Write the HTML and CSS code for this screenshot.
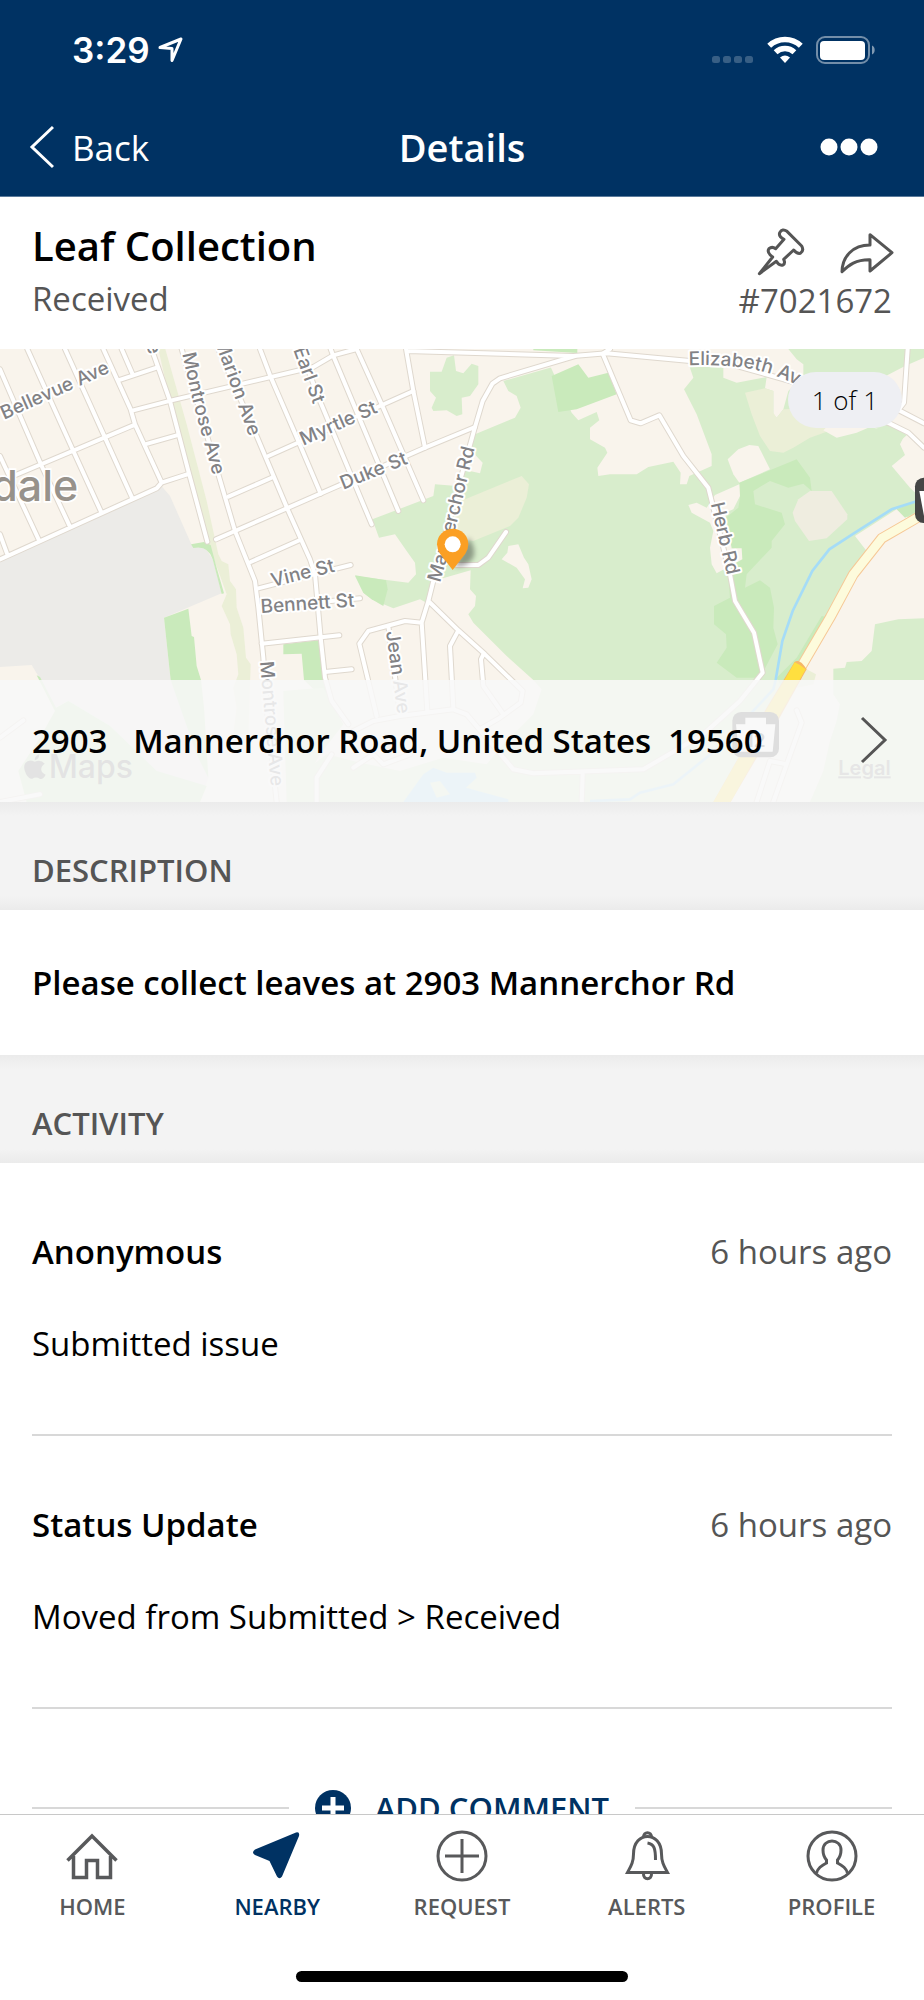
FILE: index.html
```html
<!DOCTYPE html>
<html lang="en">
<head>
    <meta charset="UTF-8">
    <meta name="viewport" content="width=device-width, initial-scale=1.0">
    <title>Details - Leaf Collection</title>
    <link rel="stylesheet" href="styles.css">
</head>
<body>
    <header class="top-bar">
        <div class="status-bar">
            <div class="status-time">
                <span>3:29</span>
                <svg width="26" height="26" viewBox="0 0 26 26" fill="none" stroke="#fff" stroke-width="3" stroke-linejoin="round"><path d="M2 10.500L23 2L14 23.500V11.500Z"/></svg>
            </div>
            <div class="status-icons">
                <svg width="42" height="28" viewBox="0 0 42 28" fill="#fff" fill-opacity="0.22">
                    <rect x="0" y="20" width="8" height="7" rx="2.500"/><rect x="11" y="20" width="8" height="7" rx="2.500"/><rect x="22" y="20" width="8" height="7" rx="2.500"/><rect x="33" y="20" width="8" height="7" rx="2.500"/>
                </svg>
                <svg width="36" height="28" viewBox="0 0 36 28" fill="none" stroke="#fff" stroke-width="5.600">
                    <path d="M2.200 9.800A23 23 0 0 1 33.800 9.800"/>
                    <path d="M8.600 16.200A14 14 0 0 1 27.400 16.200"/>
                    <path d="M13 21.600A8 8 0 0 1 23 21.600L18 27Z" fill="#fff" stroke="none"/>
                </svg>
                <svg width="60" height="28" viewBox="0 0 60 28">
                    <rect x="1" y="1" width="52" height="26" rx="8" fill="none" stroke="#fff" stroke-opacity="0.45" stroke-width="2"/>
                    <rect x="4" y="5" width="45" height="19" rx="4" fill="#fff"/>
                    <path d="M56 9.500C59.600 11 59.600 17 56 18.500Z" fill="#fff" fill-opacity="0.5"/>
                </svg>
            </div>
        </div>
        <nav class="nav-bar">
            <button class="back-btn" type="button">
                <svg width="26" height="44" viewBox="0 0 26 44" fill="none" stroke="#fff" stroke-width="3"><path d="M25 2L4 22L25 42"/></svg>
                Back
            </button>
            <h1>Details</h1>
            <button class="more-btn" type="button" aria-label="More">
                <svg width="58" height="18" viewBox="0 0 58 18" fill="#fff"><circle cx="9" cy="9" r="8.500"/><circle cx="29" cy="9" r="8.500"/><circle cx="49" cy="9" r="8.500"/></svg>
            </button>
        </nav>
    </header>

    <main>
        <section class="issue">
            <div>
                <h2>Leaf Collection</h2>
                <p>Received</p>
            </div>
            <div class="issue-side">
                <div class="issue-actions">
                    <button type="button" aria-label="Pin">
                        <svg width="48" height="48" viewBox="50 54 144 144" fill="none" stroke="#555" stroke-width="9" stroke-linejoin="round"><path d="M57 191L97 141Q78 127 86 116Q95 108 106 116L131 88Q114 80 118 68Q126 54 140 64L184 108Q192 122 180 130Q170 132 160 120L130 148Q136 160 128 165Q116 168 108 154Z"/></svg>
                    </button>
                    <button type="button" aria-label="Share">
                        <svg width="54" height="48" viewBox="302 54 162 144" fill="none" stroke="#555" stroke-width="9" stroke-linejoin="round"><path d="M392 74L458 128L392 183V149C350 148 328 165 308 185C309 140 340 105 392 105Z"/></svg>
                    </button>
                </div>
                <p>#7021672</p>
            </div>
        </section>

        <section class="map">
            <svg class="map-canvas" viewBox="0 24 2772 1359" role="img" aria-label="Map">
                <rect class="land" x="0" y="0" width="2772" height="1400"/>

                <!-- west side -->
                <path class="industrial" d="M0 655L480 430L510 465L575 612L612 615L638 655L665 757L492 830L512 1017L625 1310L600 1383L480 1300L330 1155L205 1080L165 1100L115 1005L95 972L0 978Z"/>
                <path class="field" d="M475 24H496L560 250L620 480L655 640L665 660L685 670L690 720L708 745L710 800L730 860L738 950L752 970L745 1180H700L710 1100L700 1040L715 1000L710 940L692 880L690 850L665 795L680 760L655 690L622 600L570 400L510 180Z"/>
                <path class="wood" d="M573 610L612 603L632 612L650 680L672 757L665 759L638 655Q625 612 580 621Z"/>
                <path class="wood" d="M492 830L565 803L575 885L582 888L590 975L603 1017L612 1100L625 1310L590 1240L512 1017Z"/>
                <path class="wood" d="M850 910L960 897L975 1017L1000 1100L912 1017L905 938L850 940Z"/>
                <path class="wood" d="M110 1003L120 1008L168 1100L205 1080L330 1155L470 1290L620 1335L600 1383H80L55 1290L120 1190L165 1110Z"/>

                <!-- park and east side -->
                <g transform="translate(900 0)">
                    <path class="park" d="M610 120L750 80L930 30L1450 24H1872V1383H-20L0 1300L80 1240L180 1265L300 1290L430 1250L560 1270L610 1210L700 1120L725 1045L700 1017L620 945L520 845L505 820L525 795L528 765L510 745L512 688L400 720L385 788L360 775L280 802L215 775L190 755L165 705L325 725L348 700L345 665L320 630L285 580L237 590L217 535L400 465L405 430L470 435L525 280L645 230L662 200L650 165L625 150Z"/>
                    <path class="park" d="M390 92L425 92L440 50L462 43L468 90L490 97L515 68L535 75V130L510 165L485 170L487 220L470 225L440 208L400 210L395 200L408 170L390 150Z"/>
                    <path class="park" d="M-50 1050L70 1040L130 1150L60 1240L-20 1383H-40Z"/>
                    <path class="wood" d="M165 703L258 718L263 745L250 795L215 775L190 755Z"/>
                    <path class="field" d="M470 485L665 405L687 430L680 470L655 530L630 555L520 600L450 590Z"/>
                    <path class="land" d="M510 325L548 365L540 397L500 388Z"/>
                    <path class="land" d="M605 655L622 635L625 615L655 610L672 650L685 670L695 715L685 740L668 742L675 715L650 680Z"/>
                    <path class="water" d="M310 1383L370 1300L400 1280L440 1295L525 1295L530 1310L498 1340L625 1375V1383Z"/>
                    <path class="park" d="M390 1325L420 1320L450 1360L410 1370Z"/>
                </g>
                <g transform="translate(1830 0)">
                    <path class="land" d="M-178 78L-100 24H535L560 55L580 70V105L535 150L520 205L500 230L490 220V150L465 142L470 108L380 125L340 110V80L238 75L250 110L222 145L260 220L305 340V375L238 405L230 430H210L212 395L190 362L115 378L80 400L0 400L-35 405L-38 380L-8 335L-15 320L-60 295V260L-32 238L-40 213L-95 238L-115 215Z"/>
                    <path class="wood" d="M-175 105L-95 70L-65 110L-5 95L20 160L-100 205L-155 213Z"/>
                    <path class="wood" d="M-230 24H-98V36L-230 28Z"/>
                    <path class="field" d="M405 155L465 142L490 150V215L500 230L520 205L640 200L650 272L600 290L550 320L520 335L480 330L450 285L425 220Z"/>
                    <path class="land" d="M780 130L885 75L942 50V325L890 283L780 258L740 275L680 290L640 268Z"/>
                    <path class="land" d="M845 375L885 342L870 310L885 280L942 310V480L900 440Z"/>
                    <path class="park" d="M780 250L840 240L890 283L870 300L800 262Z"/>
                    <path class="land" d="M353 355L385 325L418 312L445 315L480 385L388 425L370 400Z"/>
                    <path class="wood" d="M388 425L560 355L600 410L605 450L580 428L535 440L480 420L430 450L435 490L515 515L525 550L485 600V620L410 700L405 740L450 718L480 740L492 800L490 860L503 910L450 1010H380L320 965L350 920L348 880L312 850V795L360 770L355 700L310 560L385 500L390 470Z"/>
                    <path class="clearing" d="M548 515L565 475L600 450L665 450L712 520V535L650 592L597 600L555 540Z"/>
                    <path class="land" d="M315 462L388 430L390 465L370 505L345 515L365 622H395L397 655L370 670L320 697L305 670L300 620L310 570L300 545L245 515L235 492L260 485L290 500Z"/>
                    <path class="wood" d="M635 825L660 830L575 975L520 1050L500 1010L560 950Z"/>
                    <path class="land" d="M735 585L860 505L915 545L942 525V832L865 835L795 850L785 930L755 960L710 963L705 980L670 983V1060L690 1090L680 1140L660 1200L640 1290L600 1383H340L575 980L770 630Z"/>
                    <path class="wood" d="M860 505L915 482L942 500L885 530Z"/>
                    <path class="field" d="M590 985L618 1000L610 1030L560 1040Z"/>
                    <path class="river" d="M942 475L915 482L845 505L735 575L658 625L607 690L548 810L517 900L497 1017L490 1045L420 1120L320 1225L190 1330L90 1355L60 1375L-60 1380"/>
                </g>

                <!-- streets: grey casing below, white on top -->
                <defs>
                    <g id="streets">
                        <path d="M0 655L470 442L485 425L565 399M0 580L22 640M0 345L118 600M0 85L125 375L208 553M82 24L220 330L303 512M195 24L315 290L397 472M310 24L392 205L405 250L485 425M365 24L397 98M40 405L400 253M355 118L470 80M400 208L515 178L940 78L1000 43L1070 24M435 310L530 283"/>
                        <path d="M455 24L510 180L565 390L622 602M545 24L655 400L705 570L765 720L775 800L790 950L800 1100L830 1383M655 24L770 285L865 510L930 655L945 700L962 890L975 1010L995 1080L1045 1150M780 24L810 103L895 300L962 458"/>
                        <path d="M805 345L1240 150M685 467L820 408M648 595L705 570L1025 430L1275 320L1425 258M752 663L900 597M775 742L830 728L1052 672M780 800L1080 772M785 908L1018 883M975 993L1055 985M0 1190L70 1138M0 1383L120 1360"/>
                        <path d="M900 24L960 180L1115 550M992 24L1000 45L1195 510M1070 24L1145 190L1270 478M1218 24L1240 150L1275 320M1220 30L1720 45L1820 37L2070 60L2200 72L2370 120L2560 200L2670 248L2725 275L2772 320"/>
                        <path d="M1725 45L1500 112L1477 128L1448 180L1425 258L1380 420L1300 720L1285 780L1265 845L1282 1110M1285 780L1375 868L1455 940L1568 1050L1562 1085L1500 1130L1440 1165M1375 868L1350 915L1360 1100M1450 940L1443 955L1450 1035L1510 1120M1265 845L1215 840L1105 870L1078 908L1130 1125M1165 855L1200 1120"/>
                        <path d="M1370 672H1435L1465 650L1518 573M1830 24L1808 38L1892 238L1922 247L1978 223L2050 345L2125 440L2190 700L2205 780L2262 875L2288 995L2220 1080L2110 1180L1930 1285L1600 1297L1540 1285L1400 1120L1360 1105L1200 1125L1120 1140L1060 1170M950 1383V1310L995 1240M1060 1280L1120 1240L1150 1270L1230 1240M1748 1300L1745 1383"/>
                        <path d="M2723 24L2712 185L2695 207L2772 247M2270 1383L2310 1260L2360 1270L2405 1145L2390 1108M2360 1270L2320 1383"/>
                    </g>
                </defs>
                <use href="#streets" class="casing"/>
                <use href="#streets" class="street"/>

                <!-- highway -->
                <path class="highway-edge" d="M2772 518L2735 540L2645 592L2560 700L2490 830L2405 975"/>
                <path class="highway" d="M2772 518L2735 540L2645 592L2560 700L2490 830L2405 975"/>
                <path class="trunk-edge" d="M2384 962Q2400 952 2420 985L2300 1200L2192 1383H2140L2300 1100Z"/>
                <path class="trunk" d="M2384 964L2400 972L2417 985L2300 1190L2192 1383H2140L2300 1105L2355 1015Z"/>

                <!-- route shields -->
                <rect class="shield" x="2745" y="410" width="140" height="136" rx="26"/>
                <path class="shield-face" d="M2758 450H2772V525Z"/>
                <rect class="shield" x="2197" y="1113" width="140" height="136" rx="26"/>
                <path class="shield-face" d="M2236 1130H2298V1150H2326L2318 1232H2216L2208 1150H2236Z"/>
                <text class="shield-num" x="2267" y="1218" text-anchor="middle">12</text>

                <defs>
                    <path id="montrose" d="M547 38L578 180L660 480"/>
                    <path id="mannerchor" d="M1320 726L1372 540L1448 220"/>
                    <path id="elizabeth" d="M2066 73Q2230 68 2320 102T2480 180"/>
                </defs>
                <text class="place" x="235" y="480" text-anchor="end">dale</text>
                <g class="road-name">
                    <text transform="translate(12 236) rotate(-24)">Bellevue Ave</text>
                    <text transform="translate(448 42) rotate(72)" text-anchor="end">Ave</text>
                    <text><textPath href="#montrose">Montrose Ave</textPath></text>
                    <text transform="translate(748 288) rotate(70)" text-anchor="end">Marion Ave</text>
                    <text transform="translate(880 26) rotate(70)">Earl St</text>
                    <text transform="translate(910 314) rotate(-24)">Myrtle St</text>
                    <text transform="translate(1030 446) rotate(-22)">Duke St</text>
                    <text transform="translate(818 738) rotate(-14)">Vine St</text>
                    <text transform="translate(783 816) rotate(-4)">Bennett St</text>
                    <text><textPath href="#mannerchor">Mannerchor Rd</textPath></text>
                    <text transform="translate(1158 872) rotate(82)">Jean Ave</text>
                    <text transform="translate(780 962) rotate(85)">Montrose Ave</text>
                    <text><textPath href="#elizabeth">Elizabeth Ave</textPath></text>
                    <text transform="translate(2132 488) rotate(77)">Herb Rd</text>
                </g>

                <!-- pin -->
                <path class="pin-shadow" d="M1362 677L1405 590Q1430 620 1420 650Q1400 680 1362 677Z"/>
                <path class="pin" d="M1358 687L1320 638Q1311 625 1311 610A47 47 0 0 1 1405 610Q1405 625 1396 638Z"/>
                <circle cx="1358" cy="610" r="24" fill="#fff"/>

                <path class="maps-mark" d="M118 1240Q117 1256 104 1258Q104 1244 118 1240ZM134 1268Q122 1276 124 1288Q126 1297 137 1301Q128 1318 119 1313Q108 1306 97 1313Q87 1315 78 1299Q68 1278 76 1266Q86 1253 104 1262Q123 1254 134 1268Z"/>
                <text class="maps-text" x="146" y="1312">Maps</text>
                <a href="#legal"><text class="legal" x="2672" y="1303" text-anchor="end">Legal</text></a>
            </svg>
            <span class="counter">1 of 1</span>
            <a class="address" href="#address">
                <span class="address-text">2903 &nbsp; Mannerchor Road, United States &nbsp;19560</span>
                <svg width="28" height="48" viewBox="0 0 28 48" fill="none" stroke="#555" stroke-width="3"><path d="M2 2L25 24L2 46"/></svg>
            </a>
        </section>

        <h3 class="section-title">DESCRIPTION</h3>
        <p class="description">Please collect leaves at 2903 Mannerchor Rd</p>

        <h3 class="section-title">ACTIVITY</h3>
        <ul class="activity">
            <li>
                <div class="activity-head"><strong>Anonymous</strong><time>6 hours ago</time></div>
                <p>Submitted issue</p>
            </li>
            <li>
                <div class="activity-head"><strong>Status Update</strong><time>6 hours ago</time></div>
                <p>Moved from Submitted &gt; Received</p>
            </li>
        </ul>
        <div class="add-comment">
            <button type="button">
                <svg width="36" height="36" viewBox="0 0 36 36"><circle cx="18" cy="18" r="18" fill="#003263"/><path d="M18 7V29M7 18H29" stroke="#fff" stroke-width="5"/></svg>
                ADD COMMENT
            </button>
        </div>
    </main>

    <footer class="tab-bar">
        <nav class="tabs">
            <a href="#home">
                <svg width="52" height="52" viewBox="0 0 52 52" fill="none" stroke="#58595b" stroke-width="3.500"><path d="M1.500 30.500L26 6L50.500 30.500M7.500 26V47.500H20.500V30.500H31.500V47.500H44.500V26"/></svg>
                HOME
            </a>
            <a href="#nearby" class="active">
                <svg width="52" height="52" viewBox="0 0 52 52" fill="#003263"><path d="M45 2.500Q49 1.500 48 6L31 46.500Q28.500 50 26 46.500L18.500 31L4 25Q0 22.500 4 19.500Z"/></svg>
                NEARBY
            </a>
            <a href="#request">
                <svg width="52" height="52" viewBox="0 0 52 52" fill="none" stroke="#58595b" stroke-width="3"><circle cx="26" cy="26" r="24"/><path d="M26 9V43M9 26H43"/></svg>
                REQUEST
            </a>
            <a href="#alerts">
                <svg width="52" height="52" viewBox="0 0 52 52" fill="none" stroke="#58595b" stroke-width="3"><path d="M12.500 24C12.500 0.500 40.500 0.500 40.500 24C40.500 32 43 36 46.500 42.500H6.500C10 36 12.500 32 12.500 24Z"/><path d="M22.500 7.500C22.500 1 30.500 1 30.500 7.500M22.500 43.500C22 50.500 31 50.500 30.500 43.500M26.500 13C33 14 34.500 18 34.500 30"/></svg>
                ALERTS
            </a>
            <a href="#profile">
                <svg width="52" height="52" viewBox="0 0 52 52" fill="none" stroke="#58595b" stroke-width="3"><circle cx="26" cy="26" r="24"/><path d="M10.500 43C12 38 15 36 20.500 33V30C17 26 17 23 17 20C17 8 35 8 35 20C35 23 35 26 31.500 30V33C37 36 40 38 41.500 43"/></svg>
                PROFILE
            </a>
        </nav>
        <div class="home-indicator"></div>
    </footer>
</body>
</html>
```
FILE: styles.css
```css
* {
    box-sizing: border-box;
}

body {
    margin: 0;
    height: 100vh;
    display: flex;
    flex-direction: column;
    font-family: "Open Sans", sans-serif;
    font-size: 33px;
    color: #000000;
    background-color: #ffffff;
}

h1, h2, h3, p, ul {
    margin: 0;
    padding: 0;
}

button {
    padding: 0;
    border: none;
    background: none;
    font: inherit;
    color: inherit;
    cursor: pointer;
}

a {
    color: inherit;
    text-decoration: none;
}

svg {
    display: block;
}

/* Header */
.top-bar {
    background-color: #003263;
    color: #ffffff;
    border-bottom: 1px solid #5a7a9b;
}

.status-bar {
    display: flex;
    justify-content: space-between;
    align-items: center;
    height: 100px;
    padding: 0 48px 0 72px;
}

.status-time {
    display: flex;
    align-items: center;
    gap: 8px;
    font-family: Inter, sans-serif;
    font-size: 35px;
    font-weight: 600;
}

.status-icons {
    display: flex;
    align-items: center;
    gap: 13px;
}

.nav-bar {
    display: grid;
    grid-template-columns: 1fr auto 1fr;
    align-items: center;
    height: 96px;
    padding: 0 28px 2px;
}

.nav-bar h1 {
    font-size: 38px;
    font-weight: 600;
}

.back-btn {
    display: flex;
    align-items: center;
    gap: 18px;
    font-size: 35px;
}

.more-btn {
    justify-self: end;
    padding-right: 18px;
}

/* Issue summary */
.issue {
    display: flex;
    justify-content: space-between;
    padding: 22px 32px 22px;
    color: #555555;
}

.issue h2 {
    font-size: 40px;
    line-height: 54px;
    font-weight: 600;
    color: #000000;
}

.issue p {
    line-height: 52px;
}

.issue-actions {
    display: flex;
    justify-content: flex-end;
    gap: 35px;
    height: 56px;
    padding-top: 9px;
    margin-right: -2px;
}

/* Map */
.map {
    position: relative;
}

.map-canvas {
    width: 100%;
    height: auto;
}

.land { fill: #f9f4ec; }
.industrial { fill: #ecebe8; }
.park { fill: #d8edcc; }
.wood { fill: #c9eabb; }
.field { fill: #ebefd7; }
.clearing { fill: #efede0; }
.water { fill: #a5dcf7; }

.river {
    fill: none;
    stroke: #a5dcf7;
    stroke-width: 8;
}

.casing, .street, .highway, .highway-edge {
    fill: none;
    stroke-linejoin: round;
    stroke-linecap: round;
}

.casing {
    stroke: #dfd8ce;
    stroke-width: 18;
}

.street {
    stroke: #ffffff;
    stroke-width: 12;
}

.highway-edge {
    stroke: #f6c896;
    stroke-width: 32;
}

.highway {
    stroke: #fdfbdc;
    stroke-width: 26;
}

.trunk {
    fill: #ffdf3f;
}

.trunk-edge {
    fill: #f6b766;
}

.shield { fill: #454545; }
.shield-face { fill: #ffffff; }

.shield-num {
    font-family: Inter, sans-serif;
    font-size: 57px;
    font-weight: 600;
    fill: #454545;
}

.place {
    font-family: Inter, sans-serif;
    font-size: 129px;
    font-weight: 500;
    fill: #97928b;
    stroke: #ffffff;
    stroke-width: 10;
    paint-order: stroke;
}

.road-name {
    font-family: Inter, sans-serif;
    font-size: 57px;
    font-weight: 500;
    fill: #828285;
    stroke: #ffffff;
    stroke-width: 12;
    stroke-linejoin: round;
    paint-order: stroke;
}

.pin {
    fill: #fb9f23;
}

.pin-shadow {
    fill: #000000;
    fill-opacity: 0.35;
    filter: blur(8px);
}

.maps-mark {
    fill: #666666;
}

.maps-text {
    font-family: Inter, sans-serif;
    font-size: 96px;
    font-weight: 500;
    fill: #666666;
}

.legal {
    font-family: Inter, sans-serif;
    font-size: 60px;
    font-weight: 600;
    fill: #777777;
    text-decoration: underline;
}

.counter {
    position: absolute;
    top: 23px;
    right: 22px;
    padding: 0 24px;
    border-radius: 28px;
    background-color: #eeeff3;
    font-size: 26px;
    font-weight: 300;
    line-height: 56px;
}

.address {
    position: absolute;
    left: 0;
    right: 0;
    bottom: 0;
    display: flex;
    justify-content: space-between;
    align-items: center;
    height: 122px;
    padding: 0 36px 2px 32px;
    background-color: rgba(248, 248, 248, 0.86);
    font-weight: 600;
}

/* Sections */
.section-title {
    padding: 46px 32px 18px;
    background: linear-gradient(to bottom, #ebebeb, #f3f3f3 14px, #f3f3f3 calc(100% - 14px), #ebebeb);
    font-size: 31px;
    line-height: 44px;
    font-weight: 600;
    color: #555555;
}

.description {
    padding: 51px 32px 50px;
    line-height: 44px;
    font-weight: 600;
}

.activity {
    list-style: none;
    padding: 0 32px;
}

.activity li {
    padding: 67px 0 68px;
    border-bottom: 2px solid #d8d8d8;
    line-height: 44px;
}

.activity-head {
    display: flex;
    justify-content: space-between;
    margin-bottom: 48px;
}

.activity-head strong {
    font-weight: 600;
}

.activity-head time {
    color: #555555;
}

.add-comment {
    display: flex;
    align-items: center;
    gap: 26px;
    padding: 77px 32px;
    color: #003263;
}

.add-comment::before,
.add-comment::after {
    content: "";
    flex: 1;
    height: 2px;
    background-color: #d8d8d8;
}

.add-comment button {
    display: flex;
    align-items: center;
    gap: 24px;
    font-size: 31px;
    line-height: 44px;
    font-weight: 600;
}

main {
    flex: 1;
    min-height: 0;
    overflow-y: auto;
    scrollbar-width: none;
}

/* Tab bar */
.tab-bar {
    padding: 15px 0 18px;
    border-top: 1px solid #c8c8c8;
    background-color: #ffffff;
}

.tabs {
    display: flex;
}

.tabs a {
    flex: 1;
    display: flex;
    flex-direction: column;
    align-items: center;
    gap: 9px;
    font-size: 22px;
    line-height: 30px;
    font-weight: 600;
    color: #58595b;
}

.tabs a.active {
    color: #003263;
}

.home-indicator {
    width: 36%;
    height: 11px;
    margin: 50px auto 0;
    border-radius: 6px;
    background-color: #000000;
}
```
